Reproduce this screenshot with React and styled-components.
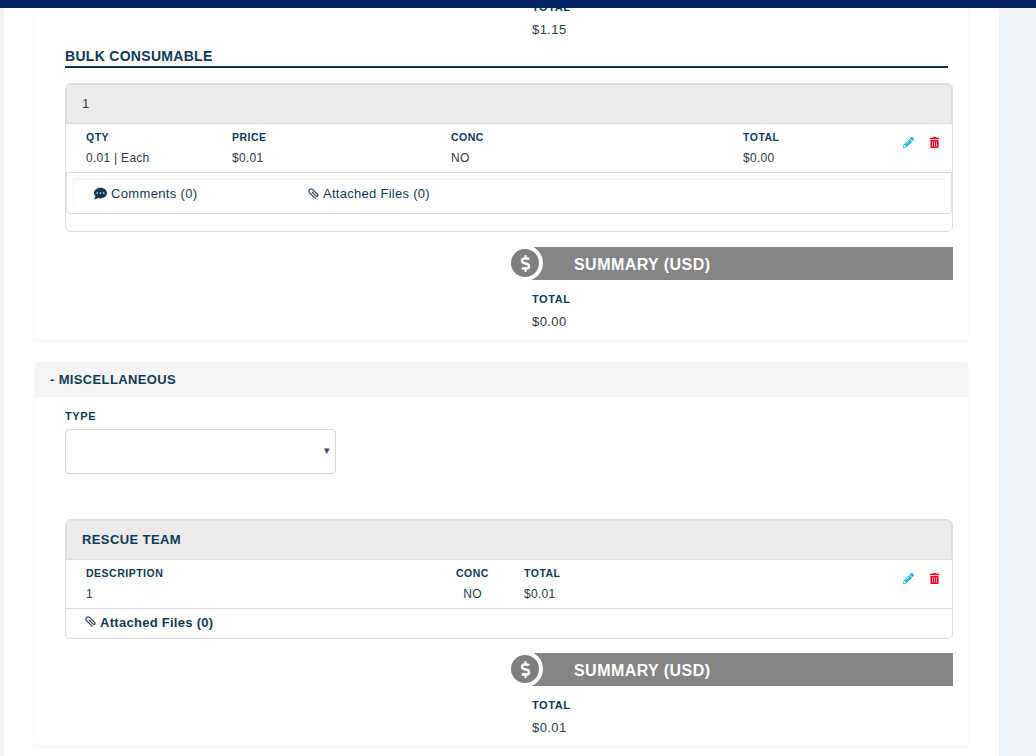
import styled, { createGlobalStyle } from "styled-components";
import { FaCommentDots, FaDollarSign, FaPencilAlt, FaTrashAlt } from "react-icons/fa";

const GlobalStyle = createGlobalStyle`
  html, body {
    margin: 0;
    height: 100%;
    overflow: hidden;
    background: #eff3f5;
    font-family: "Liberation Sans", Arial, sans-serif;
    color: #103a54;
  }
`;

const TopBar = styled.div`
  height: 8px;
  background: #062365;
`;

const Page = styled.main`
  height: 748px;
  margin: 0 37px 0 4px;
  padding: 0 31px;
  background: #fff;
  overflow: hidden;
  box-sizing: border-box;
`;

const Card = styled.section`
  background: #fff;
  border-radius: 4px;
  box-shadow: 0 1px 3px rgba(0, 0, 0, 0.06);
  margin-bottom: 22px;
  &:first-child {
    margin-top: -20px;
  }
`;

const CardHeader = styled.h2`
  margin: 0;
  height: 35px;
  padding-left: 15px;
  display: flex;
  align-items: center;
  gap: 4px;
  background: #f5f5f5;
  border-radius: 4px 4px 0 0;
  font-size: 13px;
  font-weight: 700;
  letter-spacing: 0.35px;
`;

const CardBody = styled.div`
  padding: 0 15px 0 30px;
`;

const SectionTitle = styled.h3`
  margin: -3px 5px 15px 0;
  height: 23px;
  line-height: 22px;
  border-bottom: 2px solid #0c3249;
  box-sizing: border-box;
  font-size: 14px;
  font-weight: 700;
  letter-spacing: 0.3px;
`;

const Panel = styled.div`
  border: 1px solid #ddd;
  border-radius: 6px;
  padding-bottom: ${({ $pad }) => $pad || 0}px;
`;

const PanelHead = styled.div`
  height: 40px;
  padding: 0 0 2px 15px;
  display: flex;
  align-items: center;
  background: #ebebeb;
  border: 1px solid #ddd;
  border-radius: 5px 5px 0 0;
  box-sizing: border-box;
  font-size: 13px;
  font-weight: ${({ $bold }) => ($bold ? 700 : 400)};
  letter-spacing: ${({ $bold }) => ($bold ? "0.4px" : "0")};
  color: ${({ $bold }) => ($bold ? "#103a54" : "#2c3a44")};
`;

const Row = styled.div`
  position: relative;
  height: 48px;
  padding: 7px 0 0 20px;
  box-sizing: border-box;
  display: grid;
  grid-template-columns: ${({ $cols }) => $cols};
`;

const Col = styled.div`
  text-align: ${({ $center }) => ($center ? "center" : "left")};
`;

const Label = styled.div`
  font-size: 10.5px;
  line-height: 13px;
  font-weight: 700;
  letter-spacing: 0.5px;
  white-space: nowrap;
`;

const Value = styled.div`
  margin-top: 7px;
  font-size: 12px;
  line-height: 14px;
  letter-spacing: 0.28px;
  color: #2c3a44;
  white-space: nowrap;
`;

const Actions = styled.div`
  position: absolute;
  top: 13px;
  right: 12px;
  display: flex;
  align-items: center;
  gap: 15px;
  font-size: 11px;
`;

const EditIcon = styled(FaPencilAlt)`
  color: #1cb8e0;
`;

const DeleteIcon = styled(FaTrashAlt)`
  color: #ff0022;
`;

const LinksBox = styled.div`
  height: 42px;
  padding: 5px 6px 0;
  border: 1px solid #ddd;
  border-radius: 0 0 4px 4px;
  box-sizing: border-box;
`;

const LinksInner = styled.div`
  height: 29px;
  display: flex;
  align-items: center;
  padding-left: 20px;
  border: 1px solid #f3f6f9;
  border-bottom: 0;
  border-top-width: 2px;
  box-sizing: border-box;
`;

const FileLink = styled.span`
  display: inline-flex;
  align-items: center;
  gap: ${({ $gap }) => $gap}px;
  width: ${({ $w }) => ($w ? `${$w}px` : "auto")};
  font-size: 13px;
  letter-spacing: ${({ $track }) => $track}px;
`;

const ClipSvg = styled.svg`
  width: 14px;
  height: 14px;
  margin-left: -2px;
  flex: none;
  fill: none;
  stroke: #3a5364;
  stroke-width: 1.3;
  stroke-linecap: round;
`;

const FilesRow = styled.div`
  height: 30px;
  padding: 0 0 3px 20px;
  box-sizing: border-box;
  display: flex;
  align-items: center;
  gap: 2px;
  border-top: 1px solid #ddd;
  font-size: 13px;
  font-weight: 700;
  letter-spacing: 0.28px;
`;

const Summary = styled.div`
  margin: ${({ $top }) => $top}px 0 0 444px;
  padding-bottom: 11px;
`;

const SummaryBar = styled.div`
  position: relative;
  margin-left: 21px;
  height: 33px;
  padding: 2px 0 0 44px;
  box-sizing: border-box;
  display: flex;
  align-items: center;
  background: #858585;
  color: #fff;
  font-size: 16px;
  font-weight: 700;
  letter-spacing: 0.45px;
`;

const DollarBadge = styled.span`
  position: absolute;
  left: -23px;
  top: -2px;
  width: 28px;
  height: 28px;
  border: 4px solid #fff;
  border-radius: 50%;
  background: #7f7f7f;
  display: flex;
  align-items: center;
  justify-content: center;
  font-size: 17px;
`;

const SummaryTotal = styled.div`
  margin: 13px 0 0 23px;
`;

const SummaryLabel = styled(Label)`
  font-size: 11px;
  letter-spacing: 0.6px;
`;

const SummaryValue = styled(Value)`
  margin-top: 9px;
  font-size: 13px;
  letter-spacing: 0.4px;
`;

const FieldLabel = styled(Label)`
  padding-top: 13px;
  margin-bottom: 6px;
  font-size: 11px;
  letter-spacing: 0.6px;
`;

const SelectBox = styled.div`
  position: relative;
  width: 271px;
  height: 45px;
  margin-bottom: 45px;
  border: 1px solid #ccd5e0;
  border-radius: 4px;
  box-sizing: border-box;
  &::after {
    content: "▾";
    position: absolute;
    right: 5px;
    top: 13px;
    font-size: 11px;
    line-height: 14px;
    color: #3f4a5c;
  }
`;

const Clip = () => (
  <ClipSvg viewBox="0 0 14 14">
    <path
      transform="rotate(-45 7 7)"
      d="M7 4.6V10a1.1 1.1 0 0 0 2.2 0V3a2.2 2.2 0 0 0-4.4 0v8"
    />
  </ClipSvg>
);

const SummaryBlock = ({ top, amount }) => (
  <Summary $top={top}>
    <SummaryBar>
      <DollarBadge>
        <FaDollarSign />
      </DollarBadge>
      SUMMARY (USD)
    </SummaryBar>
    <SummaryTotal>
      <SummaryLabel>TOTAL</SummaryLabel>
      <SummaryValue>{amount}</SummaryValue>
    </SummaryTotal>
  </Summary>
);

const RowActions = () => (
  <Actions>
    <EditIcon />
    <DeleteIcon />
  </Actions>
);

const bulkColumns = [
  { label: "QTY", value: "0.01 | Each" },
  { label: "PRICE", value: "$0.01" },
  { label: "CONC", value: "NO" },
  { label: "TOTAL", value: "$0.00" },
];

const rescueColumns = [
  { label: "DESCRIPTION", value: "1" },
  { label: "CONC", value: "NO", center: true },
  { label: "TOTAL", value: "$0.01" },
];

const DataRow = ({ cols, items }) => (
  <Row $cols={cols}>
    {items.map((item) => (
      <Col key={item.label} $center={item.center}>
        <Label>{item.label}</Label>
        <Value>{item.value}</Value>
      </Col>
    ))}
    <RowActions />
  </Row>
);

export default function App() {
  return (
    <>
      <GlobalStyle />
      <TopBar />
      <Page>
        <Card>
          <CardBody>
            <Summary $top={0}>
              <SummaryTotal>
                <SummaryLabel>TOTAL</SummaryLabel>
                <SummaryValue>$1.15</SummaryValue>
              </SummaryTotal>
            </Summary>
            <SectionTitle>BULK CONSUMABLE</SectionTitle>
            <Panel $pad={17}>
              <PanelHead>1</PanelHead>
              <DataRow cols="146px 219px 292px 1fr" items={bulkColumns} />
              <LinksBox>
                <LinksInner>
                  <FileLink $w={215} $gap={4} $track={0.35}>
                    <FaCommentDots />
                    Comments (0)
                  </FileLink>
                  <FileLink $gap={2} $track={0.28}>
                    <Clip />
                    Attached Files (0)
                  </FileLink>
                </LinksInner>
              </LinksBox>
            </Panel>
            <SummaryBlock top={15} amount="$0.00" />
          </CardBody>
        </Card>
        <Card>
          <CardHeader>
            <span>-</span>
            MISCELLANEOUS
          </CardHeader>
          <CardBody>
            <FieldLabel>TYPE</FieldLabel>
            <SelectBox />
            <Panel>
              <PanelHead $bold>RESCUE TEAM</PanelHead>
              <DataRow cols="335px 103px 1fr" items={rescueColumns} />
              <FilesRow>
                <Clip />
                Attached Files (0)
              </FilesRow>
            </Panel>
            <SummaryBlock top={14} amount="$0.01" />
          </CardBody>
        </Card>
      </Page>
    </>
  );
}
